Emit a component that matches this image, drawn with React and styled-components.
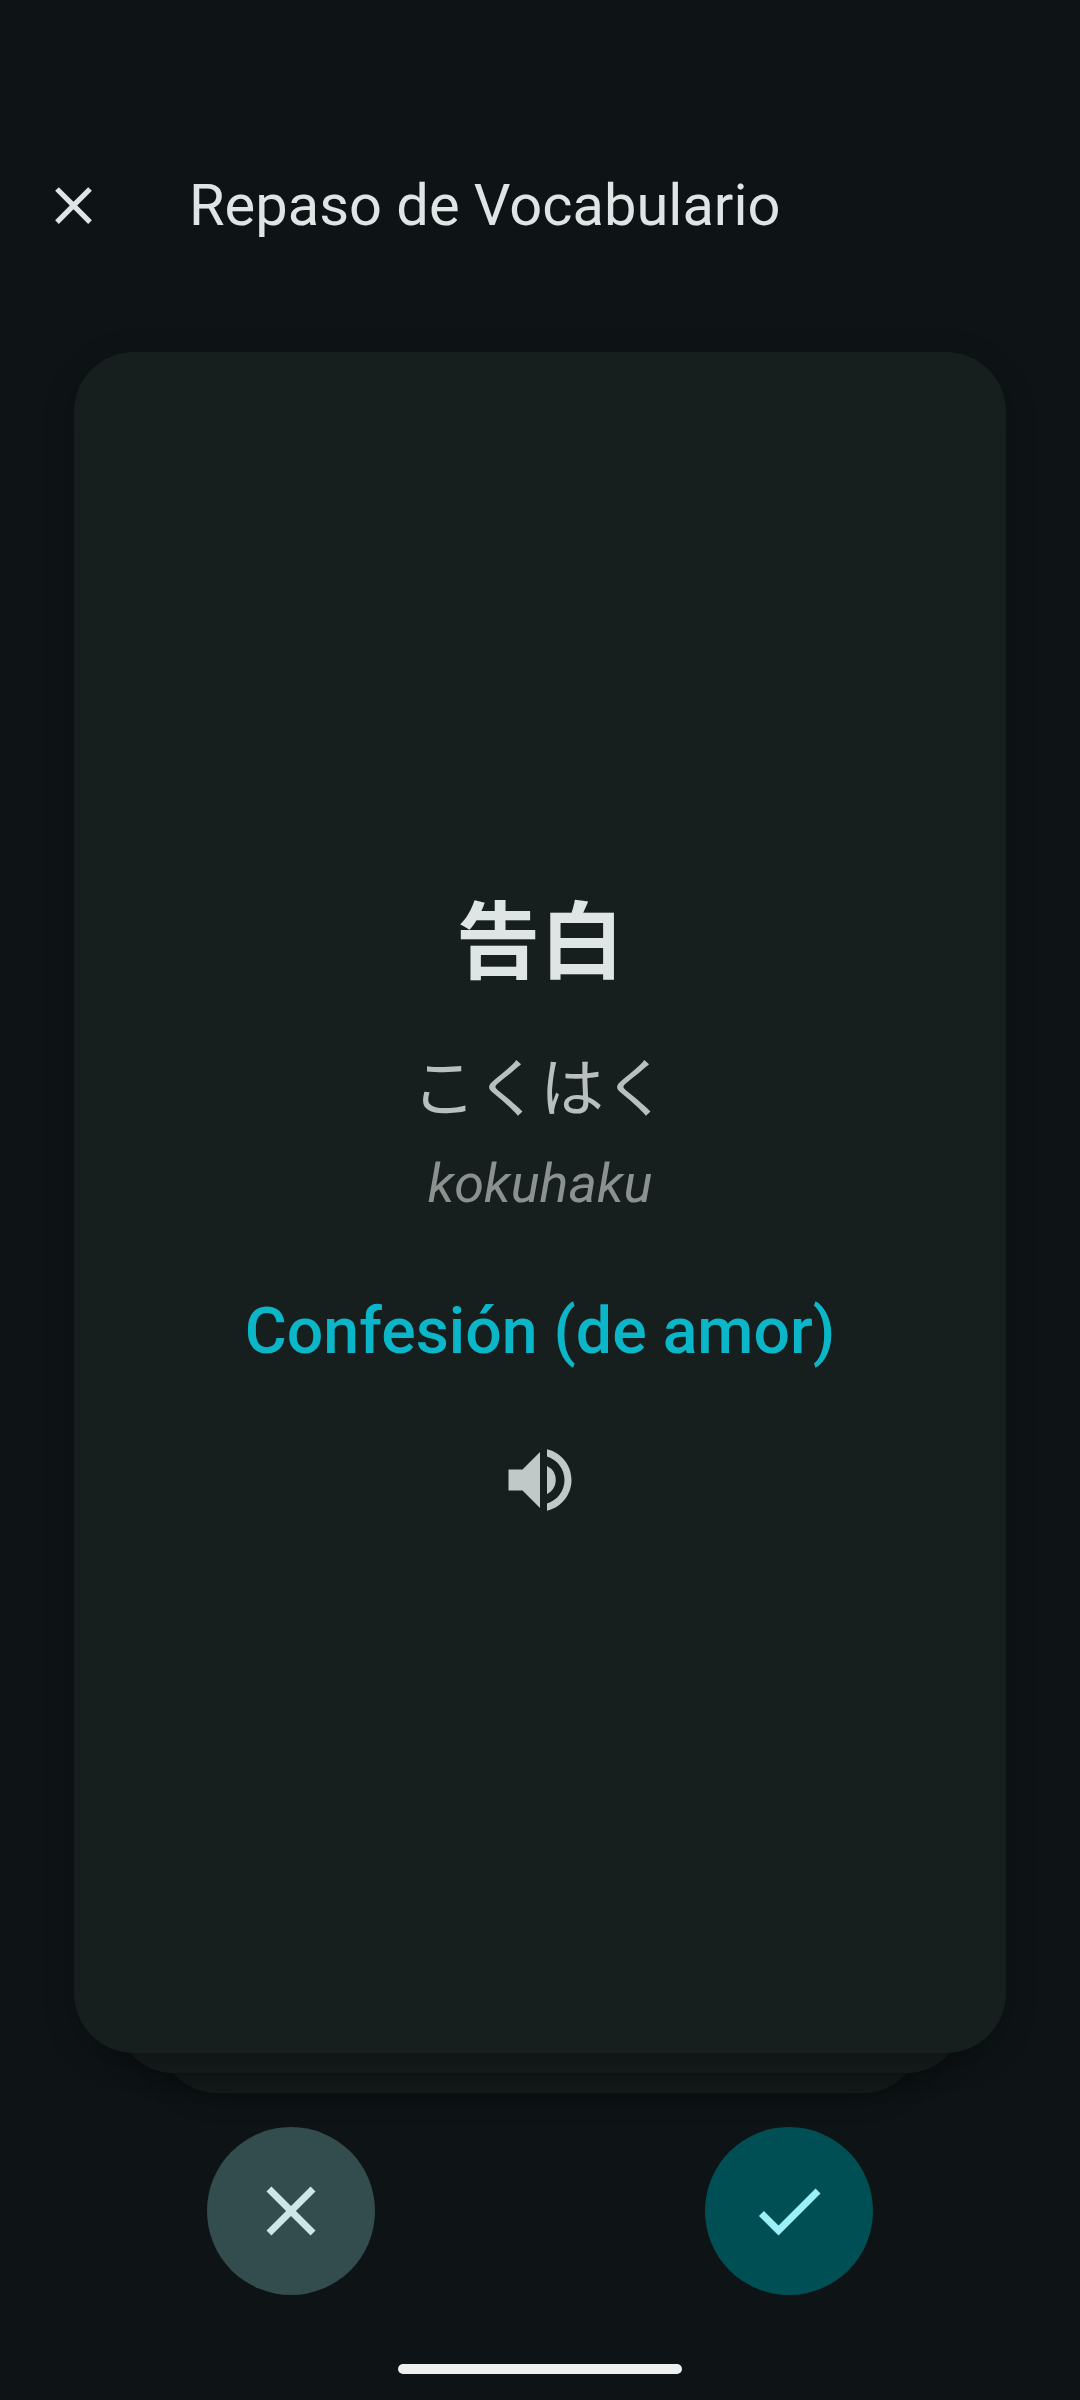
import React from 'react';
import styled, { createGlobalStyle } from 'styled-components';
import { MdClose, MdCheck, MdVolumeUp } from 'react-icons/md';

const GlobalStyle = createGlobalStyle`
    html, body {
        margin: 0;
        padding: 0;
        background: #0e1416;
    }
`;

function App() {
    return (
        <Page>
            <GlobalStyle />
            <Header>
                <CloseIcon />
                <Title>Repaso de Vocabulario</Title>
            </Header>
            <CardStack>
                <BackCard $inset={160} $drop={40} $tone="#141b1a" />
                <BackCard $inset={117} $drop={20} $tone="#151c1b" />
                <Card>
                    <Kanji lang="ja">告白</Kanji>
                    <Kana lang="ja">こくはく</Kana>
                    <Romaji>kokuhaku</Romaji>
                    <Meaning>Confesión (de amor)</Meaning>
                    <Speaker />
                </Card>
            </CardStack>
            <Actions>
                <RoundButton $bg="#334c4e" $fg="#cde7e9">
                    <MdClose size={84} />
                </RoundButton>
                <RoundButton $bg="#004f55" $fg="#9cf0f8">
                    <MdCheck size={84} />
                </RoundButton>
            </Actions>
            <HomeBar />
        </Page>
    );
}

export default App;

const Page = styled.div`
    width: 1080px;
    height: 2400px;
    overflow: hidden;
    background: #0e1416;
    display: flex;
    flex-direction: column;
    font-family: Roboto, "Noto Sans CJK JP", sans-serif;
`;

const Header = styled.div`
    height: 80px;
    padding: 165px 0 107px 42px;
    display: flex;
    align-items: center;
    gap: 84px;
`;

const CloseIcon = styled(MdClose)`
    width: 63px;
    height: 63px;
    color: #dfe4e4;
    flex-shrink: 0;
`;

const Title = styled.div`
    font-size: 57.8px;
    line-height: 78px;
    color: #dfe4e4;
    white-space: nowrap;
`;

const CardStack = styled.div`
    position: relative;
    margin: 0 74px;
    height: 1701px;
`;

const BackCard = styled.div`
    position: absolute;
    top: 60px;
    left: ${props => props.$inset - 74}px;
    right: ${props => props.$inset - 74}px;
    bottom: -${props => props.$drop}px;
    background: ${props => props.$tone};
    border-radius: 56px;
    box-shadow: 0 6px 24px rgba(0, 0, 0, 0.3);
`;

const Card = styled.div`
    position: relative;
    height: 100%;
    box-sizing: border-box;
    padding-bottom: 3px;
    background: #171f1e;
    border-radius: 60px;
    box-shadow: 0 8px 30px rgba(0, 0, 0, 0.3);
    display: flex;
    flex-direction: column;
    align-items: center;
    justify-content: center;
`;

const Kanji = styled.div`
    font-family: "Noto Sans CJK JP", sans-serif;
    font-size: 84px;
    font-weight: 700;
    line-height: 112px;
    color: #dfe5e5;
`;

const Kana = styled.div`
    font-family: "Noto Sans CJK JP", sans-serif;
    font-size: 64px;
    line-height: 88px;
    margin-top: 47px;
    color: #b9bebe;
`;

const Romaji = styled.div`
    font-size: 54px;
    font-style: italic;
    line-height: 72px;
    margin-top: 21px;
    color: #8c9190;
`;

const Meaning = styled.div`
    font-size: 64.4px;
    font-weight: 500;
    line-height: 88px;
    margin-top: 67px;
    color: #0bb6c8;
`;

const Speaker = styled(MdVolumeUp)`
    width: 84px;
    height: 84px;
    margin-top: 63px;
    color: #c0c8c8;
`;

const Actions = styled.div`
    display: flex;
    justify-content: center;
    gap: 330px;
    padding-top: 74px;
`;

const RoundButton = styled.div`
    width: 168px;
    height: 168px;
    border-radius: 50%;
    background: ${props => props.$bg};
    color: ${props => props.$fg};
    display: flex;
    align-items: center;
    justify-content: center;
`;

const HomeBar = styled.div`
    width: 284px;
    height: 10px;
    margin: 69px auto 0;
    border-radius: 5px;
    background: #eeefef;
`;
